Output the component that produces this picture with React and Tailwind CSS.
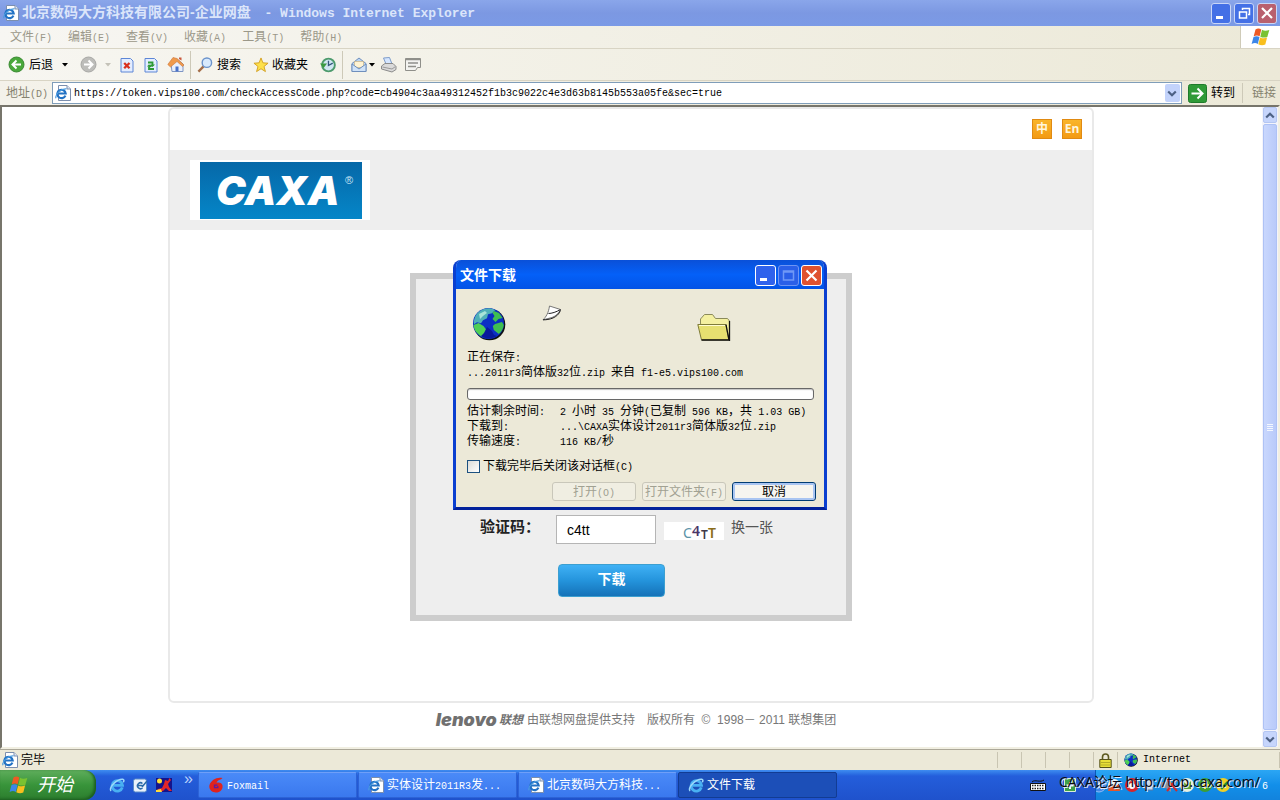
import React from "react";

/* Splits a string so that half-width characters get a monospaced face. */
function T({ children }) {
  const parts = String(children).match(/[\x20-\x7e]+|[^\x20-\x7e]+/g) || [];
  return parts.map((p, i) =>
    /^[\x20-\x7e]/.test(p) ? (
      <span key={i} className="whitespace-pre font-['Liberation_Mono',monospace] text-[10px] leading-none">{p}</span>
    ) : (
      p
    )
  );
}

function IeLogo({ className = "h-4 w-4" }) {
  return (
    <svg viewBox="0 0 16 16" className={className} aria-hidden="true">
      <path d="M13.300 10.400A5.200 5.200 0 1 1 13.500 8.400H4.600" fill="none" stroke="#49b0f2" strokeWidth="2.900" />
      <path d="M2 14C-.5 10.500 8 1.600 13.800 2.200c1.600.3 1.200 2 .5 3" fill="none" stroke="#9bd8fa" strokeWidth="1.500" />
    </svg>
  );
}

function IePage({ className = "h-4 w-4" }) {
  return (
    <svg viewBox="0 0 16 16" className={className} aria-hidden="true">
      <path d="M3.500.5h8.500l3.500 3.500v11.500h-12z" fill="#fff" stroke="#7c8fae" />
      <path d="M12 .5V4h3.500" fill="#dde6f4" stroke="#7c8fae" />
      <path d="M10.400 10.600A4.200 4.200 0 1 1 10.700 8.500H3.600" fill="none" stroke="#2272c4" strokeWidth="2.200" />
      <path d="M1 13.200C-.4 9.500 6.500 3.200 11.600 4" fill="none" stroke="#4a9ce0" strokeWidth="1.200" />
    </svg>
  );
}

function WinFlag({ className }) {
  return (
    <svg viewBox="0 0 20 18" className={className} aria-hidden="true">
      <path d="M4.500 1.500C6.500.1 8.500.3 10.300 1.500L8.600 8.300C7 7.200 5 7.200 2.700 8.300z" fill="#ee5a24" />
      <path d="M11 1.800c2.200 1.300 4.500 1.200 7.300.2L16.300 8.900c-2.300 1-4.800.9-7-.2z" fill="#7ac231" />
      <path d="M2.500 9.100c2-1.200 4.200-1.100 6 0L6.800 15.900C5 14.800 3 14.800.6 16z" fill="#3c86e8" />
      <path d="M9.100 9.400c2.200 1.300 4.600 1.200 7 .2L14.300 16.500c-2.300 1-4.800.9-7-.2z" fill="#f9bf1e" />
    </svg>
  );
}

function Globe({ className }) {
  return (
    <svg viewBox="0 0 34 34" className={className} aria-hidden="true">
      <circle cx="17.500" cy="17.500" r="15.800" fill="#111" />
      <circle cx="16.500" cy="16.500" r="15.500" fill="#0c2fc4" />
      <path d="M3 10C6 4 11 1.500 17 1.300c3 .2 5 1 6 2l-3 3-4 1-1 4-4 2-2 3-4-1-3 2c-.3-3 0-5 1-7z" fill="#4fb0b8" />
      <path d="M1.500 18l5-2 5 3 3 4-2 5-3 1.500C5 27 2 23 1.500 18z" fill="#4fcf55" />
      <path d="M22 4l5 2 3.500 5-4 1-3 3-3-3 2-3-2-3zM23 17l7-2 1.800 3c-.5 4-2.500 7-5 9l-5-4-1-4z" fill="#3fbe52" />
      <path d="M7 7l6-3 2 2-4 3-3 3z" fill="#a8e4d8" />
      <path d="M9 29l3-3 3-6 5 4 2 4 3 1c-5 3-11 3.500-16 0z" fill="#08189b" />
    </svg>
  );
}

const Drop = ({ color = "#000" }) => (
  <svg viewBox="0 0 6 4" className="h-1 w-1.5" aria-hidden="true">
    <path d="M0 0h6L3 3.500z" fill={color} />
  </svg>
);

const Chevron = ({ up }) => (
  <svg viewBox="0 0 10 7" className="h-[7px] w-2.5" aria-hidden="true">
    <path d={up ? "M1.200 5.500L5 1.800l3.800 3.700" : "M1.200 1.500L5 5.200l3.800-3.700"} fill="none" stroke="#4d6185" strokeWidth="2.200" />
  </svg>
);

const ToolButton = ({ label, className = "", children }) => (
  <button type="button" aria-label={label} className={"flex h-6 shrink-0 items-center " + className}>
    {children}
  </button>
);

function TitleBar() {
  const btn = "flex h-[21px] w-5 items-center justify-center rounded-[3px] border border-[#c9d6f7]";
  return (
    <header className="flex h-[26px] items-center justify-between bg-linear-to-b from-[#8aa6ea] via-[#7c98e2] to-[#7b9ae6] pr-[3px] pl-[3px]">
      <div className="flex items-center gap-[3px]">
        <IePage />
        <h1 className="text-[14px] leading-5 font-bold whitespace-pre text-[#dbe5fa]">
          北京数码大方科技有限公司-企业网盘
          <span className="ml-1.5 font-['Liberation_Mono',monospace] text-[13px]"> - Windows Internet Explorer</span>
        </h1>
      </div>
      <div className="flex gap-[3px]">
        <button type="button" aria-label="最小化" className={btn + " bg-[#4470e6]"}>
          <svg viewBox="0 0 18 18" className="h-[18px] w-[18px]"><path d="M4 12h7v3H4z" fill="#fff" /></svg>
        </button>
        <button type="button" aria-label="还原" className={btn + " bg-[#4470e6]"}>
          <svg viewBox="0 0 18 18" className="h-[18px] w-[18px]" fill="none" stroke="#fff">
            <path d="M7.500 6V4.500h7v6H13" strokeWidth="1.500" /><path d="M4.500 8h7v6h-7z" strokeWidth="1.500" />
          </svg>
        </button>
        <button type="button" aria-label="关闭" className={btn + " bg-[#b9606e]"}>
          <svg viewBox="0 0 18 18" className="h-[18px] w-[18px]"><path d="M4 4l10 10M14 4L4 14" stroke="#fff" strokeWidth="2.200" /></svg>
        </button>
      </div>
    </header>
  );
}

function MenuBar() {
  return (
    <nav className="flex h-[23px] border-b border-[#d8d4c4] bg-linear-to-r from-[#f7f6f2] to-[#ece9d8]">
      <div className="flex flex-1 items-center gap-4 pl-2.5 text-[#9b9889]">
        {["文件(F)", "编辑(E)", "查看(V)", "收藏(A)", "工具(T)", "帮助(H)"].map((m) => (
          <button type="button" key={m}><T>{m}</T></button>
        ))}
      </div>
      <div className="flex w-10 items-center justify-center border-l border-[#cfcbb8] bg-white">
        <WinFlag className="h-[18px] w-5" />
      </div>
    </nav>
  );
}

function ToolBar() {
  return (
    <div className="flex h-8 items-center border-b border-[#d8d4c4] bg-linear-to-r from-[#f7f6f1] to-[#ece9d8] pl-2">
      <ToolButton className="gap-1">
        <svg viewBox="0 0 17 17" className="h-[17px] w-[17px]">
          <circle cx="8.500" cy="8.500" r="7.500" fill="#4aa83c" stroke="#3a8a32" />
          <path d="M13 8.500H5M8.500 4.500l-4 4 4 4" stroke="#fff" strokeWidth="2" fill="none" />
        </svg>
        后退
      </ToolButton>
      <ToolButton label="后退列表" className="ml-[9px]"><Drop /></ToolButton>
      <ToolButton label="前进" className="ml-3">
        <svg viewBox="0 0 17 17" className="h-[17px] w-[17px]">
          <circle cx="8.500" cy="8.500" r="7.500" fill="#bdbdba" stroke="#a8a8a5" />
          <path d="M4 8.500h8M8.500 4.500l4 4-4 4" stroke="#fff" strokeWidth="2" fill="none" />
        </svg>
      </ToolButton>
      <ToolButton label="前进列表" className="ml-2"><Drop color="#c4c2b8" /></ToolButton>
      <ToolButton label="停止" className="ml-2">
        <svg viewBox="0 0 16 16" className="h-4 w-4">
          <path d="M2 1.500h9.500l2.500 2.500v11H2z" fill="#e3edff" stroke="#5d86d6" />
          <path d="M5.200 6l5.300 5.300M10.500 6l-5.300 5.300" stroke="#d9301f" strokeWidth="2.300" />
        </svg>
      </ToolButton>
      <ToolButton label="刷新" className="ml-2">
        <svg viewBox="0 0 16 16" className="h-4 w-4">
          <path d="M2 1.500h9.500l2.500 2.500v11H2z" fill="#e3edff" stroke="#5d86d6" />
          <path d="M5 5.500h4.500V8L6 10v2h5" stroke="#2c9a34" strokeWidth="1.800" fill="none" />
          <path d="M7 7.500h5L9.500 10zM4 9.500h4.500L6 7.300z" fill="#2c9a34" />
        </svg>
      </ToolButton>
      <ToolButton label="主页" className="ml-2">
        <svg viewBox="0 0 18 17" className="h-[17px] w-[18px]">
          <path d="M4 8l6-5 6 5v7.500H5z" fill="#e9effb" stroke="#7e95c4" />
          <path d="M.800 8.500L6 1.500 10 2.500 17 9l-1.500 1.500L10 5.500 3.500 11z" fill="#f09a4c" stroke="#c9763a" strokeWidth=".6" />
          <path d="M12 1.500h2.500v3L12 3z" fill="#c9563a" />
          <path d="M8.500 10.500h3v5h-3z" fill="#4a72c8" />
        </svg>
      </ToolButton>
      <span className="ml-[5px] h-7 w-px bg-[#cdc9b8]" />
      <ToolButton className="ml-1.5 gap-1">
        <svg viewBox="0 0 17 17" className="h-4 w-4">
          <path d="M7 10l-5.500 5.500" stroke="#a46e48" strokeWidth="2.500" />
          <circle cx="10.500" cy="6" r="5" fill="#d8eafd" stroke="#6b93cb" strokeWidth="1.500" />
        </svg>
        搜索
      </ToolButton>
      <ToolButton className="ml-3 gap-[3px]">
        <svg viewBox="0 0 17 17" className="h-4 w-4">
          <path d="M8.500 1l2 5.200 5.500.4-4.300 3.500 1.500 5.400-4.700-3-4.700 3 1.500-5.400L1 6.600l5.500-.4z" fill="#fde04a" stroke="#d3a021" />
        </svg>
        收藏夹
      </ToolButton>
      <ToolButton label="历史" className="ml-3">
        <svg viewBox="0 0 17 17" className="h-4 w-4">
          <circle cx="9" cy="8.500" r="6.800" fill="#cfe6f2" stroke="#4c9a6c" strokeWidth="2" />
          <path d="M9 4v5l4.500-2.500" stroke="#31567b" fill="none" strokeWidth="1.400" />
          <path d="M0 7h7.500l-3.700 4.800z" fill="#3a9a40" />
        </svg>
      </ToolButton>
      <span className="ml-1.5 h-7 w-px bg-[#cdc9b8]" />
      <ToolButton label="邮件" className="ml-2 gap-0.5">
        <svg viewBox="0 0 16 16" className="h-4 w-4">
          <path d="M1 6.500L8 1l7 5.500v8H1z" fill="#b9d4f1" stroke="#6f8fbd" />
          <path d="M3.500 4.500h9v6h-9z" fill="#fff3d2" stroke="#c8b184" strokeWidth=".7" />
          <path d="M1 7l7 5 7-5v7.500H1z" fill="#cfe2f8" stroke="#6f8fbd" />
        </svg>
        <Drop />
      </ToolButton>
      <ToolButton label="打印" className="ml-[5px]">
        <svg viewBox="0 0 17 16" className="h-4 w-[17px]">
          <path d="M3.500 1l6-.5 2.500 6.500H6z" fill="#d5e6ff" stroke="#7e9cca" />
          <path d="M1.500 9L5 6.500h8l3 3v3l-4 2.500-10.500-3z" fill="#dadada" stroke="#8b8b8b" />
          <path d="M2.500 10l9.500 2 3.500-2.500" stroke="#999" fill="none" />
        </svg>
      </ToolButton>
      <ToolButton label="编辑" className="ml-2">
        <svg viewBox="0 0 16 16" className="h-4 w-4">
          <path d="M.5 1.500h15v9h-3l-2 3h-10z" fill="#f3f3f0" stroke="#8f8f8a" />
          <path d="M.5 2.500h15M3 6h10M3 9.500h8" stroke="#8f8f8a" strokeWidth="1.500" />
        </svg>
      </ToolButton>
    </div>
  );
}

function AddressBar() {
  return (
    <div className="flex h-6 items-center bg-linear-to-r from-[#f4f2ea] to-[#ece9d8] pr-1 pl-1.5">
      <label htmlFor="address" className="w-[46px] shrink-0 text-[#85826f]"><T>地址(D)</T></label>
      <div className="flex h-[22px] flex-1 items-center gap-[3px] border border-[#7f9db9] bg-white pr-px pl-0.5">
        <IePage className="h-4 w-4 shrink-0" />
        <input
          id="address"
          className="min-w-0 flex-1 bg-transparent pt-0.5 font-['Liberation_Mono',monospace] text-[10px] text-black outline-none"
          defaultValue="https://token.vips100.com/checkAccessCode.php?code=cb4904c3aa49312452f1b3c9022c4e3d63b8145b553a05fe&sec=true"
        />
        <button type="button" aria-label="展开地址列表" className="flex h-[18px] w-[15px] items-center justify-center rounded-xs bg-[#c3d3fb]">
          <Chevron />
        </button>
      </div>
      <button type="button" className="ml-1.5 flex items-center gap-1">
        <svg viewBox="0 0 19 19" className="h-[19px] w-[19px]">
          <rect x=".5" y=".5" width="18" height="18" rx="2" fill="#2f9a37" stroke="#1f7a2b" />
          <path d="M3.500 9.500h11M9.500 4.500l5 5-5 5" stroke="#fff" strokeWidth="2" fill="none" />
        </svg>
        转到
      </button>
      <span className="mx-[7px] h-5 w-px bg-[#cdc9b8]" />
      <a href="#links" className="ml-0.5 text-[#85826f]">链接</a>
    </div>
  );
}

function ScrollBar() {
  const cap = "flex h-4 w-3.5 items-center justify-center rounded-xs bg-[#c6d5fc] border border-[#b4c6f2]";
  return (
    <div className="flex w-4 shrink-0 flex-col items-center gap-px bg-[#f4f4fb]">
      <button type="button" aria-label="向上滚动" className={cap}><Chevron up /></button>
      <div className="flex w-3.5 flex-1 flex-col items-center justify-center gap-px rounded-xs border border-[#aec2f5] bg-linear-to-r from-[#c9d7fd] to-[#b9cafa]">
        {[0, 1, 2, 3].map((i) => <span key={i} className="h-px w-1.5 bg-[#f3f7ff]" />)}
      </div>
      <button type="button" aria-label="向下滚动" className={cap}><Chevron /></button>
    </div>
  );
}

function LangButton({ children }) {
  return (
    <button type="button" className="flex h-5 w-5 items-center justify-center border border-[#e08a12] bg-linear-to-b from-[#f9b52a] to-[#f39a12] font-['Open_Sans','Noto_Sans_CJK_SC',sans-serif] text-[12px] leading-4 font-bold text-[#fff6dc]">
      {children}
    </button>
  );
}

function WebPage() {
  return (
    <main className="min-w-0 flex-1 bg-white pr-0.5">
      <div className="mx-auto flex h-[596px] w-[926px] max-w-full flex-col rounded-md border-2 border-[#e9e9e9]">
        <div className="flex h-[41px] items-center justify-end gap-2.5 pr-2.5 pb-0.5">
          <LangButton>中</LangButton>
          <LangButton>En</LangButton>
        </div>
        <div className="flex h-20 items-center bg-[#eeeeee] pl-5">
          <div className="bg-white pt-0.5 pr-2 pb-px pl-2.5">
            <svg viewBox="0 0 162 57" className="h-[57px] w-[162px]" role="img" aria-label="CAXA">
              <defs>
                <linearGradient id="caxa" x1="0" y1="0" x2="0" y2="1">
                  <stop offset="0" stopColor="#0668a8" /><stop offset="1" stopColor="#0586c8" />
                </linearGradient>
              </defs>
              <rect width="162" height="57" fill="url(#caxa)" />
              <text x="16" y="43" fontSize="40" fontWeight="900" fontStyle="italic" fontFamily="Inter, sans-serif" fill="#fff">CAXA</text>
              <text x="145" y="22" fontSize="11" fontFamily="Liberation Sans, sans-serif" fill="#cfe6f5">®</text>
            </svg>
          </div>
        </div>
        <form className="mx-auto mt-[43px] flex h-[348px] w-[442px] flex-col justify-end border-[6px] border-[#cdcdcd] bg-[#eeeeee] pb-[18px]" onSubmit={(e) => e.preventDefault()}>
          <div className="flex items-start pl-16">
            <label htmlFor="captcha" className="w-[76px] text-[15px] leading-6 font-bold text-[#222]">验证码：</label>
            <input id="captcha" defaultValue="c4tt" className="h-[29px] w-[100px] border border-[#b5b5b5] bg-white px-2.5 font-['Liberation_Sans',sans-serif] text-[14px] text-black outline-none" />
            <svg viewBox="0 0 60 18" className="mt-[7px] ml-2 h-[18px] w-[60px] overflow-visible" fontFamily="Noto Sans, sans-serif" role="img" aria-label="C4TT">
              <rect width="60" height="18" fill="#fff" />
              <text x="19" y="16" fontSize="14" fill="#5b93a8">C</text>
              <text x="28" y="14" fontSize="14" fontWeight="600" fill="#4b3567">4</text>
              <text x="37" y="17" fontSize="12" fontWeight="600" fill="#403a4a">T</text>
              <text x="44" y="16" fontSize="14" fontWeight="600" fill="#8a6d1a">T</text>
            </svg>
            <a href="#refresh" className="ml-[7px] text-[14px] leading-6 text-[#555]">换一张</a>
          </div>
          <button type="submit" className="mt-5 ml-[142px] h-[33px] w-[107px] rounded-sm border border-[#3c9fd0] bg-linear-to-b from-[#3fb1f5] via-[#2494dc] to-[#1572b8] pb-1 text-[14px] font-bold text-white">
            下载
          </button>
        </form>
      </div>
      <footer className="mt-[5px] flex h-6 items-center justify-center pl-2.5 text-[#777]">
        <span className="mr-1 flex items-center gap-0.5 text-[#707070] italic">
          <span className="font-['Inter',sans-serif] text-[18px] leading-5 font-black">lenovo</span>
          <b>联想</b>
        </span>
        <span className="whitespace-pre font-['Liberation_Sans','Noto_Sans_CJK_SC',sans-serif]">由联想网盘提供支持　版权所有  ©  1998－ 2011 联想集团</span>
      </footer>
    </main>
  );
}

function DownloadDialog() {
  const btn = "flex h-[21px] w-[21px] items-center justify-center rounded-[3px] border";
  const action = "h-[19px] w-[84px] rounded-[3px] border whitespace-nowrap";
  return (
    <section role="dialog" aria-labelledby="dialog-title" className="absolute top-[260px] left-1/2 w-[374px] -translate-x-1/2 overflow-hidden rounded-t-lg border-x-[3px] border-b-[3px] border-[#0a3fd0] border-b-[#02229a] bg-[#ece9d8]">
      <div className="flex h-[29px] items-center justify-between bg-linear-to-b from-[#0a50d8] via-[#0460f8] to-[#0353e6] pr-0.5 pl-1">
        <h2 id="dialog-title" className="text-[14px] leading-5 font-bold text-white">文件下载</h2>
        <div className="flex gap-0.5 pt-0.5">
          <button type="button" aria-label="最小化" className={btn + " border-white bg-[#2f62ec]"}>
            <svg viewBox="0 0 19 19" className="h-[19px] w-[19px]"><path d="M4 12h7v3H4z" fill="#fff" /></svg>
          </button>
          <button type="button" disabled aria-label="最大化" className={btn + " border-[#6d94f4] bg-[#2a5fe8]"}>
            <svg viewBox="0 0 19 19" className="h-[19px] w-[19px]"><path d="M4.500 5h10v9h-10zM4.500 6h10" fill="none" stroke="#6f98f6" strokeWidth="1.500" /></svg>
          </button>
          <button type="button" aria-label="关闭" className={btn + " border-white bg-[#df5230]"}>
            <svg viewBox="0 0 19 19" className="h-[19px] w-[19px]"><path d="M4.500 4.500l10 10M14.500 4.500l-10 10" stroke="#fff" strokeWidth="2.200" /></svg>
          </button>
        </div>
      </div>
      <div className="pr-2 pb-1.5 pl-[11px] leading-[15px] text-black">
        <div className="flex h-[61px] items-start pt-4 pl-[5px]">
          <Globe className="mt-0.5 h-[34px] w-[34px]" />
          <svg viewBox="0 0 20 16" className="ml-9 h-4 w-5" aria-hidden="true">
            <path d="M7.500 1L18.500 4.500C17 8 14 11 10 12.500L1 14.800C4 12 6.500 8 7.500 1z" fill="#fff" stroke="#777" />
            <path d="M6.500 8.500c3 0 8-1.500 12-4M1 14.800c6 .2 15-2 17.500-9.500" fill="none" stroke="#222" />
          </svg>
          <svg viewBox="0 0 34 30" className="mt-2 ml-[135px] h-[30px] w-[34px]" aria-hidden="true">
            <path d="M3.500 10V6l4-4.500h8l3 4h12l2 2.500v18h-27z" fill="#f4f0a0" stroke="#8b8a5a" />
            <path d="M.8 11.500h28l3 15.500H4.500z" fill="#e6e070" stroke="#7f7c3a" />
            <path d="M29 11.500l3 15.500H4.500M32.500 8v20" fill="none" stroke="#111" strokeWidth="1.300" />
            <path d="M2 12.500h26" stroke="#fffdd0" />
          </svg>
        </div>
        <p className="h-[15px]"><T>正在保存:</T></p>
        <p className="h-[15px]"><T>...2011r3简体版32位.zip 来自 f1-e5.vips100.com</T></p>
        <div role="progressbar" aria-label="下载进度" aria-valuenow={0} className="mt-2 mr-0.5 h-3 rounded-[3px] border border-[#686868] bg-white shadow-[inset_0_1px_1px_#c4c4c4]" />
        <dl className="mt-1 grid auto-rows-[15px] grid-cols-[93px_1fr] whitespace-nowrap">
          <dt><T>估计剩余时间:</T></dt>
          <dd><T>2 小时 35 分钟(已复制 596 KB，共 1.03 GB)</T></dd>
          <dt><T>下载到:</T></dt>
          <dd><T>{"...\\CAXA实体设计2011r3简体版32位.zip"}</T></dd>
          <dt><T>传输速度:</T></dt>
          <dd><T>116 KB/秒</T></dd>
        </dl>
        <label className="mt-2.5 flex h-[15px] items-center gap-[3px]">
          <input type="checkbox" className="h-[13px] w-[13px] appearance-none border border-[#1c5180] bg-linear-to-br from-[#dcdcd7] to-white" />
          <span><T>下载完毕后关闭该对话框(C)</T></span>
        </label>
        <div className="mt-2 flex justify-end gap-1.5 leading-4">
          <button type="button" disabled className={action + " border-[#c9c7ba] bg-[#f0eee2] text-[#a1a192]"}><T>打开(O)</T></button>
          <button type="button" disabled className={action + " border-[#c9c7ba] bg-[#f0eee2] text-[#a1a192]"}><T>打开文件夹(F)</T></button>
          <button type="button" className={action + " border-[#003c74] bg-[#f6f5f0] shadow-[inset_0_0_0_2px_#a9c5f2]"}>取消</button>
        </div>
      </div>
    </section>
  );
}

function StatusBar() {
  return (
    <div className="flex h-[21px] items-center border-t border-[#aca899] bg-[#ece9d8] pl-0.5">
      <IePage />
      <span className="ml-[3px] flex-1">完毕</span>
      <div className="flex h-4 items-center">
        {[0, 1, 2, 3].map((i) => <span key={i} className="h-4 w-6 border-l border-[#c9c5b2]" />)}
        <span className="flex h-4 w-6 items-center justify-center border-l border-[#c9c5b2]">
          <svg viewBox="0 0 13 15" className="h-[15px] w-[13px]" aria-hidden="true">
            <path d="M3.500 7V4a3 3 0 0 1 6 0v3" fill="none" stroke="#5d5a20" strokeWidth="1.600" />
            <path d="M.8 6.500h11.400v8H.8z" fill="#e9df37" stroke="#54511a" />
            <path d="M2 9.500h9M2 12h9" stroke="#b5ad28" />
          </svg>
        </span>
        <span className="flex w-[163px] items-center gap-[5px] border-x border-[#c9c5b2] pl-1.5 font-['Liberation_Mono',monospace] text-[10px]">
          <Globe className="h-3.5 w-3.5" />
          Internet
        </span>
      </div>
    </div>
  );
}

function TaskButton({ icon, active, children }) {
  return (
    <button
      type="button"
      className={
        "flex h-[26px] w-[159px] items-center gap-[3px] rounded-xs border pl-[9px] text-white " +
        (active ? "border-[#123c93] bg-[#1c4fb8]" : "border-[#2d63d6] border-t-[#6f9ff8] bg-linear-to-b from-[#4a8af8] to-[#3a78ee]")
      }
    >
      {icon}
      <span className="whitespace-nowrap"><T>{children}</T></span>
    </button>
  );
}

function TaskBar() {
  return (
    <div className="relative flex h-[30px] items-center bg-linear-to-b from-[#3f8cf0] via-[#245edb] via-20% to-[#1f52cc]">
      <button type="button" className="flex h-[30px] w-24 items-center gap-2 rounded-r-xl bg-linear-to-b from-[#5fae5c] via-[#38943a] to-[#2c7d2e] pl-[9px] text-[18px] text-white italic shadow-[inset_-2px_-1px_3px_#1b5c1e]">
        <WinFlag className="h-[18px] w-5" />
        开始
      </button>
      <div className="ml-[13px] flex w-[89px] items-center gap-2">
        <a href="#ie" aria-label="Internet Explorer"><IeLogo /></a>
        <a href="#desktop" aria-label="显示桌面">
          <svg viewBox="0 0 15 15" className="h-[15px] w-[15px]">
            <rect x=".5" y="1" width="13" height="13" rx="2" fill="#e9f1fb" stroke="#5b8cc9" />
            <path d="M9.500 5.500a3 3 0 1 0 0 4.500M4.500 7.500h5M9 9l5-6" fill="none" stroke="#2a6aa8" strokeWidth="1.500" />
          </svg>
        </a>
        <a href="#app" aria-label="快速启动">
          <svg viewBox="0 0 16 16" className="h-4 w-4">
            <path d="M0 1h16v14H0z" fill="#14148c" />
            <circle cx="3.500" cy="4" r="2.500" fill="#ffe23a" />
            <path d="M9 3l3 1 1.500-3L15 3l-3 4 1 3 3 4h-3l-3-3-3 3-6 1 1-3 4-1 2-4z" fill="#e3262a" />
            <path d="M0 13l5-1 1 3H0z" fill="#ffd93a" />
          </svg>
        </a>
        <span className="-mt-3 ml-1 text-[16px] leading-4 text-[#b9d2fb]">»</span>
      </div>
      <div className="flex gap-px">
        <TaskButton icon={
          <svg viewBox="0 0 16 16" className="h-4 w-4 shrink-0">
            <path d="M14.500 1C9-.5 3 3 1.500 8c-1 4 2 7.500 6.500 7.500S15 12 14.500 8.500C14 6 11 5 8.500 6l1-2c1.500-1.200 3-1 5-3z" fill="#e0231c" />
            <path d="M9.500 8.200H6.500v2.500h3.300V9M6.500 10.500" fill="none" stroke="#5f1ba0" strokeWidth="1.300" />
          </svg>
        }>Foxmail</TaskButton>
        <TaskButton icon={<IePage className="h-4 w-4 shrink-0" />}>实体设计2011R3发...</TaskButton>
        <TaskButton icon={<IePage className="h-4 w-4 shrink-0" />}>北京数码大方科技...</TaskButton>
        <TaskButton active icon={<IeLogo className="h-4 w-4 shrink-0" />}>文件下载</TaskButton>
      </div>
      <div className="ml-auto flex h-full items-center">
        <svg viewBox="0 0 16 13" className="mr-[17px] h-[13px] w-4" aria-hidden="true">
          <path d="M2 3c3-3 8 1 12-2" fill="none" stroke="#111" />
          <path d="M.5 4.500h15v7H.5z" fill="#fff" stroke="#111" />
          <path d="M2 6.500h12M2 9.500h12" stroke="#222" strokeWidth="1.500" strokeDasharray="1.500 1" />
        </svg>
        <svg viewBox="0 0 14 16" className="mr-[18px] h-4 w-3.5" aria-hidden="true">
          <path d="M1.500 1.500h11v13h-11z" fill="#3fa14a" stroke="#d9edd9" />
          <path d="M7 5v7M3.500 8.500h7" stroke="#fff" strokeWidth="2" />
        </svg>
        <div className="flex h-full w-[185px] items-center border-l border-[#0b57b8] bg-linear-to-b from-[#2ba6f4] via-[#128fe9] to-[#1283dd]">
          <svg viewBox="0 0 140 18" className="h-[18px] w-[140px]" aria-hidden="true">
            <circle cx="3" cy="9" r="7" fill="#3f86e8" stroke="#8dbcf8" />
            <path d="M6 5L2 9l4 4" fill="none" stroke="#fff" strokeWidth="1.500" />
            <circle cx="18" cy="9" r="6" fill="#f4f4f4" /><path d="M13 9h10l1 6H12z" fill="#e2572b" />
            <circle cx="36" cy="9" r="7" fill="#d8242a" /><circle cx="36" cy="10" r="3" fill="#fff" />
            <path d="M49 4h8v10h-8z" fill="#c9d8e8" stroke="#5878a8" />
            <path d="M65 6h5l5-4v14l-5-4h-5z" fill="#8a8fa0" /><path d="M71 3l10 12M81 3L71 15" stroke="#d42a2a" strokeWidth="2" />
            <circle cx="91" cy="9" r="7" fill="#e8efe0" /><path d="M88 6l3 3 4-4v8h-7z" fill="#5aa33a" />
            <circle cx="109" cy="9" r="7" fill="#3d9e33" /><path d="M109 5v8M105 9h8" stroke="#f4e04a" strokeWidth="2" />
            <circle cx="127" cy="9" r="7" fill="#f1cf24" /><path d="M123 9l3 3 6-6" stroke="#2c8a30" fill="none" strokeWidth="2.500" />
          </svg>
          <span className="ml-auto pr-3 text-white"><T>6</T></span>
        </div>
      </div>
      <p className="absolute right-5 bottom-2 font-['Noto_Sans','Noto_Sans_CJK_SC',sans-serif] text-[14px] leading-5 whitespace-pre text-[#0a0a14] [text-shadow:1px_1px_0_#dfe9f8]">
        CAXA论坛 http://top.caxa.com/
      </p>
    </div>
  );
}

export default function App() {
  return (
    <div className="relative flex min-h-screen flex-col bg-[#ece9d8] font-['Liberation_Sans','Noto_Sans_CJK_SC',sans-serif] text-[12px] leading-4 text-black">
      <TitleBar />
      <MenuBar />
      <ToolBar />
      <AddressBar />
      <div className="flex flex-1 border-x-2 border-t-2 border-b-2 border-[#f1efe2] border-t-[#77756b] border-l-[#77756b]">
        <WebPage />
        <ScrollBar />
      </div>
      <StatusBar />
      <TaskBar />
      <DownloadDialog />
    </div>
  );
}
